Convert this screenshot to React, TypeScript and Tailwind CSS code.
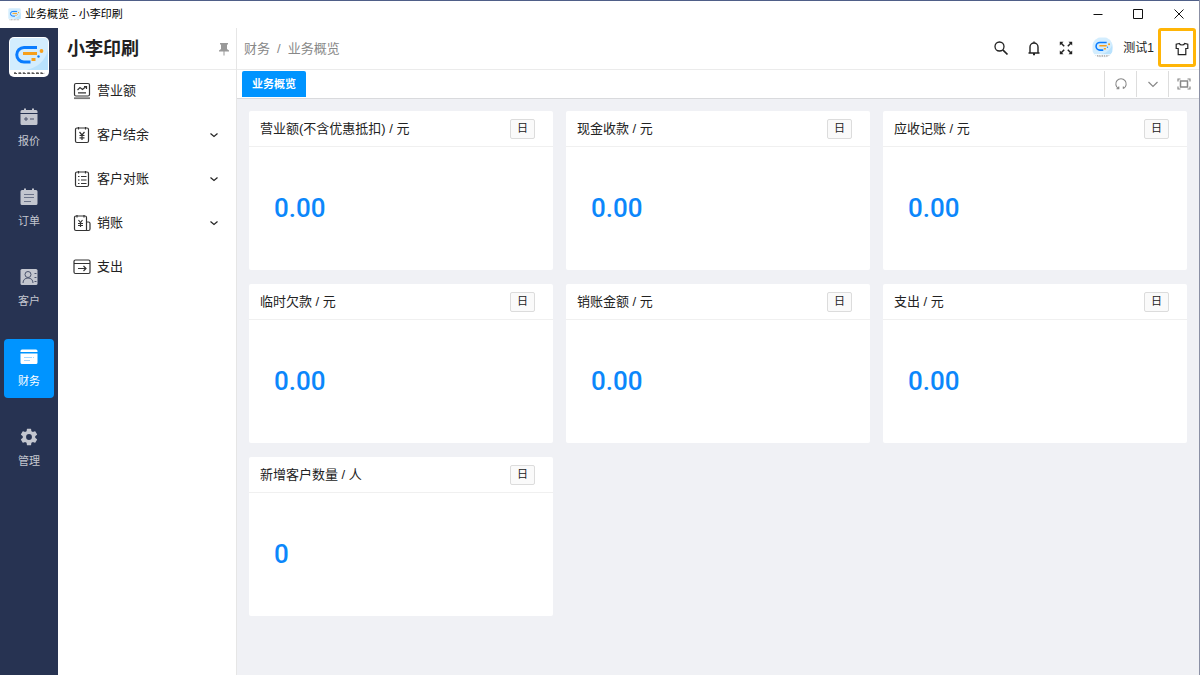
import React from 'react';

type IconProps = { className?: string };

const LogoMark: React.FC<IconProps> = ({ className }) => (
    <svg viewBox="0 0 40 40" className={className} aria-hidden="true">
        <rect width="40" height="40" rx="5" fill="#fff" />
        <path d="M5 1h30a4 4 0 0 1 4 4v28H1V5a4 4 0 0 1 4-4z" fill="#d3edfe" />
        <path d="M39 13v20H17C28 31 36 24 39 13z" fill="#b9e2fd" />
        <g fill="none">
            <path d="M28 10.500H15a7.200 7.200 0 0 0 0 14.500h6.500" stroke="#0a7cff" strokeWidth="3" />
            <path d="M14 16.500h14" stroke="#f7a01c" strokeWidth="3" />
            <path d="M22.500 22.500h4" stroke="#f7a01c" strokeWidth="3" />
        </g>
        <circle cx="32.500" cy="14" r="1.900" fill="#f7a01c" />
        <circle cx="29.500" cy="19.500" r="1.200" fill="#0a7cff" />
        <g stroke="#888" strokeWidth="1">
            <path d="M5 35.500h31" strokeDasharray="2 2.500 2.500 1.800" />
            <path d="M5 36.500h31" strokeDasharray="3 1.400" stroke="#555" />
        </g>
    </svg>
);

const QuoteIcon = () => (
    <svg viewBox="0 0 18 18" className="size-[18px]" aria-hidden="true">
        <path d="M2 2h2V.5h2V2h6V.5h2V2h2a1.500 1.500 0 0 1 1.500 1.500V5H.5V3.500A1.500 1.500 0 0 1 2 2zM.5 6h17v9.500A1.500 1.500 0 0 1 16 17H2a1.500 1.500 0 0 1-1.500-1.500z" fill="currentColor" />
        <path d="M4 11h4M6 9v4M10 11h4" stroke="#4a536d" />
    </svg>
);

const OrderIcon = () => (
    <svg viewBox="0 0 18 18" className="size-[18px]" aria-hidden="true">
        <path d="M2 2h2V.5h2V2h6V.5h2V2h2a1.500 1.500 0 0 1 1.500 1.500v12A1.500 1.500 0 0 1 16 17H2a1.500 1.500 0 0 1-1.500-1.500v-12A1.500 1.500 0 0 1 2 2z" fill="currentColor" />
        <path d="M4 6.500h10M4 9.500h10M4 13.500h7" stroke="#6b7389" />
    </svg>
);

const CustomerIcon = () => (
    <svg viewBox="0 0 18 18" className="size-[18px]" aria-hidden="true">
        <rect x="0.500" y="1" width="17" height="16" rx="1.500" fill="currentColor" />
        <g fill="none" stroke="#4a536d">
            <circle cx="8" cy="6.500" r="3" />
            <path d="M3 15c0-3 2-5 5-5s5 2 5 5M14.500 5.500h2M14.500 9.500h2M14.500 13.500h2" />
        </g>
    </svg>
);

const FinanceIcon = () => (
    <svg viewBox="0 0 18 18" className="size-[18px]" aria-hidden="true">
        <path d="M2 1.500h14A1.500 1.500 0 0 1 17.500 3v1H.5V3A1.500 1.500 0 0 1 2 1.500zM.5 5.500h17v9A1.500 1.500 0 0 1 16 16H2a1.500 1.500 0 0 1-1.500-1.500z" fill="currentColor" />
        <path d="M4 9.500h8M13 9.500h1M4 12.500h6" stroke="#a5d6ff" />
    </svg>
);

const ManageIcon = () => (
    <svg viewBox="0 0 24 24" className="size-[20px]" fill="currentColor" aria-hidden="true">
        <path d="M19.430 12.980c.04-.32.07-.64.07-.98s-.03-.66-.07-.98l2.110-1.650a.5.5 0 0 0 .12-.64l-2-3.460a.5.5 0 0 0-.61-.22l-2.490 1a7.300 7.300 0 0 0-1.690-.98l-.38-2.650A.49.49 0 0 0 14 2h-4a.49.49 0 0 0-.49.42l-.38 2.650c-.61.25-1.170.59-1.690.98l-2.490-1a.5.5 0 0 0-.61.22l-2 3.460a.5.5 0 0 0 .12.64l2.110 1.650c-.04.32-.07.65-.07.98s.03.66.07.98l-2.110 1.650a.5.5 0 0 0-.12.64l2 3.460c.12.22.39.3.61.22l2.490-1c.52.4 1.080.73 1.690.98l.38 2.650c.03.24.24.42.49.42h4c.25 0 .46-.18.49-.42l.38-2.650c.61-.25 1.170-.59 1.690-.98l2.490 1c.23.09.49 0 .61-.22l2-3.460a.5.5 0 0 0-.12-.64zM12 15.500a3.500 3.500 0 1 1 0-7 3.500 3.500 0 0 1 0 7z" />
    </svg>
);

const MenuSvg: React.FC<{ children: React.ReactNode }> = ({ children }) => (
    <svg viewBox="0 0 18 18" className="size-[18px] shrink-0" fill="none" stroke="#333" strokeWidth="1.200" aria-hidden="true">
        {children}
    </svg>
);

const TurnoverIcon = () => (
    <MenuSvg>
        <rect x="1.500" y="1.500" width="15" height="12.500" rx="1.500" />
        <path d="M4.500 8l2.500-2.500 2.500 2L13 4.500M11 4.500h2.500V7M5 10.800h8" />
        <path d="M1 16.200h16" strokeWidth="1.800" stroke="#777" />
    </MenuSvg>
);

const BalanceIcon = () => (
    <MenuSvg>
        <rect x="2.500" y="2" width="13" height="14.500" rx="1.500" />
        <path d="M5.500 1v2.500M12.500 1v2.500M6.500 6L9 9l2.500-3M9 9v5M6.500 9.500h5M6.500 11.800h5" />
    </MenuSvg>
);

const StatementIcon = () => (
    <MenuSvg>
        <rect x="2.500" y="2" width="13" height="14.500" rx="1.500" />
        <path d="M5.500 1v2.500M12.500 1v2.500M8 6.500h5.500M8 10h5.500M8 13.500h5.500M5 6.500h1.500M5 10h1.500M5 13.500h1.500" />
    </MenuSvg>
);

const WriteOffIcon = () => (
    <MenuSvg>
        <path d="M12 16.500H3A1.500 1.500 0 0 1 1.500 15V3.500A1.500 1.500 0 0 1 3 2h9a1.500 1.500 0 0 1 1.500 1.500v13zM13.500 8h2A1.500 1.500 0 0 1 17 9.500V15a1.500 1.500 0 0 1-1.500 1.500h-3.500M4 1v2.500M11 1v2.500M5.500 6L7.500 8.500 9.500 6M7.500 8.500V13M5 9.500h5M5 11.500h5" />
    </MenuSvg>
);

const ExpenseIcon = () => (
    <MenuSvg>
        <rect x="1" y="2" width="16" height="13.500" rx="1.500" />
        <path d="M1 5.500h16M5 10.500h8M10.500 8l2.500 2.500L10.500 13" />
    </MenuSvg>
);

const Chevron: React.FC<IconProps> = ({ className }) => (
    <svg viewBox="0 0 12 12" className={className} fill="none" stroke="currentColor" strokeWidth="1.200" aria-hidden="true">
        <path d="M2.500 4.500L6 7.500l3.500-3" />
    </svg>
);

const navItems = [
    { label: '报价', Icon: QuoteIcon },
    { label: '订单', Icon: OrderIcon },
    { label: '客户', Icon: CustomerIcon },
    { label: '财务', Icon: FinanceIcon, active: true },
    { label: '管理', Icon: ManageIcon },
];

const menuItems = [
    { label: '营业额', Icon: TurnoverIcon },
    { label: '客户结余', Icon: BalanceIcon, expandable: true },
    { label: '客户对账', Icon: StatementIcon, expandable: true },
    { label: '销账', Icon: WriteOffIcon, expandable: true },
    { label: '支出', Icon: ExpenseIcon },
];

const cards = [
    { title: '营业额(不含优惠抵扣) / 元', value: '0.00' },
    { title: '现金收款 / 元', value: '0.00' },
    { title: '应收记账 / 元', value: '0.00' },
    { title: '临时欠款 / 元', value: '0.00' },
    { title: '销账金额 / 元', value: '0.00' },
    { title: '支出 / 元', value: '0.00' },
    { title: '新增客户数量 / 人', value: '0' },
];

const TitleBar = () => (
    <div className="flex h-7 shrink-0 items-center border-t border-[#4f5f88] bg-white pl-2">
        <LogoMark className="size-[13px]" />
        <span className="ml-1 text-[11px] text-black">业务概览 - 小李印刷</span>
        <div className="ml-auto flex h-full pb-[2px] text-[#111]">
            <button type="button" aria-label="最小化" className="flex w-10 items-center justify-center">
                <svg viewBox="0 0 12 12" className="size-3" stroke="currentColor"><path d="M1.500 6.500h9" /></svg>
            </button>
            <button type="button" aria-label="最大化" className="flex w-10 items-center justify-center">
                <svg viewBox="0 0 12 12" className="size-3" fill="none" stroke="currentColor"><path d="M1.500 1.500h9v9h-9z" /></svg>
            </button>
            <button type="button" aria-label="关闭" className="flex w-[41px] items-center justify-center">
                <svg viewBox="0 0 12 12" className="size-3" stroke="currentColor"><path d="M1.500 1.500l9 9M10.500 1.500l-9 9" /></svg>
            </button>
        </div>
    </div>
);

const NavRail = () => (
    <nav className="flex w-[58px] shrink-0 flex-col items-center bg-[#273352]">
        <LogoMark className="mt-[9px] size-10" />
        <div className="mt-[22px] flex flex-col gap-[21px]">
            {navItems.map(({ label, Icon, active }) => (
                <a
                    key={label}
                    href="#"
                    className={`flex h-[59px] w-[50px] flex-col items-center rounded pt-2 text-[11px] leading-4 ${active ? 'bg-[#0094ff] text-white' : 'text-[#c3c6cf]'}`}
                >
                    <span className="flex h-5 items-center"><Icon /></span>
                    <span className="mt-[6px]">{label}</span>
                </a>
            ))}
        </div>
    </nav>
);

const SideMenu = () => (
    <aside className="flex w-[179px] shrink-0 flex-col border-r border-[#e6e6e6] bg-white">
        <div className="flex h-[42px] items-center border-b border-[#ebebeb] pr-[6px] pl-[9px]">
            <h1 className="text-lg font-bold text-[#222]">小李印刷</h1>
            <button type="button" aria-label="固定" className="ml-auto text-[#999]">
                <svg viewBox="0 0 12 14" className="h-[14px] w-3" fill="currentColor"><path d="M2 1h8v1.500H9V7l2 1.500V9.500H1V8.500L3 7V2.500H2zM5.500 9.500h1V13.500h-1z" /></svg>
            </button>
        </div>
        <ul className="flex flex-col gap-[2px]">
            {menuItems.map(({ label, Icon, expandable }) => (
                <li key={label}>
                    <a href="#" className="flex h-[42px] items-center pr-4 pl-[15px] text-[13px] text-[#222]">
                        <Icon />
                        <span className="ml-[6px]">{label}</span>
                        {expandable && <Chevron className="ml-auto size-3" />}
                    </a>
                </li>
            ))}
        </ul>
    </aside>
);

const TopBar = () => (
    <header className="flex h-[42px] shrink-0 items-center border-b border-[#ebebeb] bg-white pr-[3px] pl-[7px]">
        <div className="flex text-[13px] text-[#888]">
            <a href="#">财务</a>
            <span className="mx-[7px]">/</span>
            <span>业务概览</span>
        </div>
        <div className="ml-auto flex items-center self-start text-[#222]">
            <button type="button" aria-label="搜索">
                <svg viewBox="0 0 16 16" className="size-4" fill="none" stroke="currentColor" strokeWidth="1.300"><circle cx="6.500" cy="6.500" r="4.500" /><path d="M9.800 9.800l4.700 4.700" strokeWidth="1.700" /></svg>
            </button>
            <button type="button" aria-label="通知" className="ml-[17px]">
                <svg viewBox="0 0 16 16" className="size-4" fill="none" stroke="currentColor" strokeWidth="1.400"><path d="M2.500 13h11M4 13V7a4 4 0 0 1 8 0v6M8 1.500V3M7 14.500h2" /></svg>
            </button>
            <button type="button" aria-label="全屏" className="ml-4">
                <svg viewBox="0 0 16 16" className="size-4" stroke="currentColor" strokeWidth="1.500" fill="currentColor">
                    <path d="M3 3l3.200 3.200M13 3L9.800 6.200M3 13l3.200-3.200M13 13L9.800 9.800" />
                    <path d="M1.800 1.800h3.700L1.800 5.500zM14.200 1.800h-3.700l3.700 3.700zM1.800 14.200h3.700l-3.700-3.700zM14.200 14.200h-3.700l3.700-3.700z" stroke="none" />
                </svg>
            </button>
            <button type="button" className="ml-[18px] flex items-center gap-[10px] text-xs">
                <span className="flex size-[21px] items-center justify-center overflow-hidden rounded-full bg-[#d3edfe]">
                    <LogoMark className="size-[21px]" />
                </span>
                测试1
            </button>
            <button type="button" aria-label="主题" className="ml-1 flex h-[39px] w-[38px] items-center justify-end rounded-[3px] border-[3px] border-[#ffb507] pt-[2px] pr-1">
                <svg viewBox="0 0 14 14" className="size-[14px]" fill="none" stroke="currentColor" strokeWidth="1.200"><path d="M4.300 1.500L1.200 2.200v4.300h2v6.200h7.600V6.500h2V2.200L9.700 1.500C9 3.500 5 3.500 4.300 1.500z" /></svg>
            </button>
        </div>
    </header>
);

const TabBar = () => (
    <div className="flex h-[29px] shrink-0 items-center border-b border-[#d9dadd] bg-white pl-[5px] text-[#888]">
        <button type="button" className="h-[26px] w-16 rounded-t-[2px] bg-[#0094ff] text-[11px] font-bold text-white">业务概览</button>
        <div className="ml-auto flex h-[26px]">
            <button type="button" aria-label="刷新" className="flex w-8 items-center justify-center border-l border-[#ddd]">
                <svg viewBox="0 0 14 14" className="size-[14px]" fill="none" stroke="currentColor" strokeWidth="1.100"><path d="M4.500 11.500a5.200 5.200 0 1 1 5 0M2.500 11.800h2.300V9.500M9.300 9.500v2.300" /></svg>
            </button>
            <button type="button" aria-label="更多" className="flex w-8 items-center justify-center border-l border-[#ddd]">
                <svg viewBox="0 0 14 14" className="size-[14px]" fill="none" stroke="currentColor" strokeWidth="1.200"><path d="M2.500 5L7 9.500 11.500 5" /></svg>
            </button>
            <button type="button" aria-label="内容全屏" className="flex w-[31px] items-center justify-center border-l border-[#ddd]">
                <svg viewBox="0 0 14 12" className="h-3 w-[14px]" fill="none" stroke="currentColor" strokeWidth="1.200"><path d="M3.500 3h7v6h-7z" strokeWidth="1.500" /><path d="M1 3.500V1h2.500M10.500 1H13v2.500M1 8.500V11h2.500M10.500 11H13V8.500" /></svg>
            </button>
        </div>
    </div>
);

const StatCard: React.FC<{ title: string; value: string }> = ({ title, value }) => (
    <section className="rounded-[2px] bg-white">
        <div className="flex h-9 items-center justify-between border-b border-[#f0f0f0] pr-[18px] pl-[11px]">
            <h2 className="text-[13px] text-[#222]">{title}</h2>
            <button type="button" className="flex h-5 w-[25px] items-center justify-center rounded-[2px] border border-[#dcdcdc] bg-[#fafafa] text-[11px] text-[#222]">日</button>
        </div>
        <p className="flex h-[123px] items-center pl-[25px] font-['Roboto',sans-serif] text-[26px] font-medium text-[#0c87fb]">{value}</p>
    </section>
);

const App: React.FC = () => {
    return (
        <div className="flex min-h-screen flex-col border-r border-[#8b90a5] bg-white font-['Liberation_Sans','Noto_Sans_CJK_SC',sans-serif]">
            <TitleBar />
            <div className="flex flex-1">
                <NavRail />
                <SideMenu />
                <div className="flex min-w-0 flex-1 flex-col bg-[#f0f1f5]">
                    <TopBar />
                    <TabBar />
                    <main className="grid grid-cols-3 gap-x-[13px] gap-y-[14px] px-3 pt-3 pb-3">
                        {cards.map((card) => (
                            <StatCard key={card.title} {...card} />
                        ))}
                    </main>
                </div>
            </div>
        </div>
    );
};

export default App;
